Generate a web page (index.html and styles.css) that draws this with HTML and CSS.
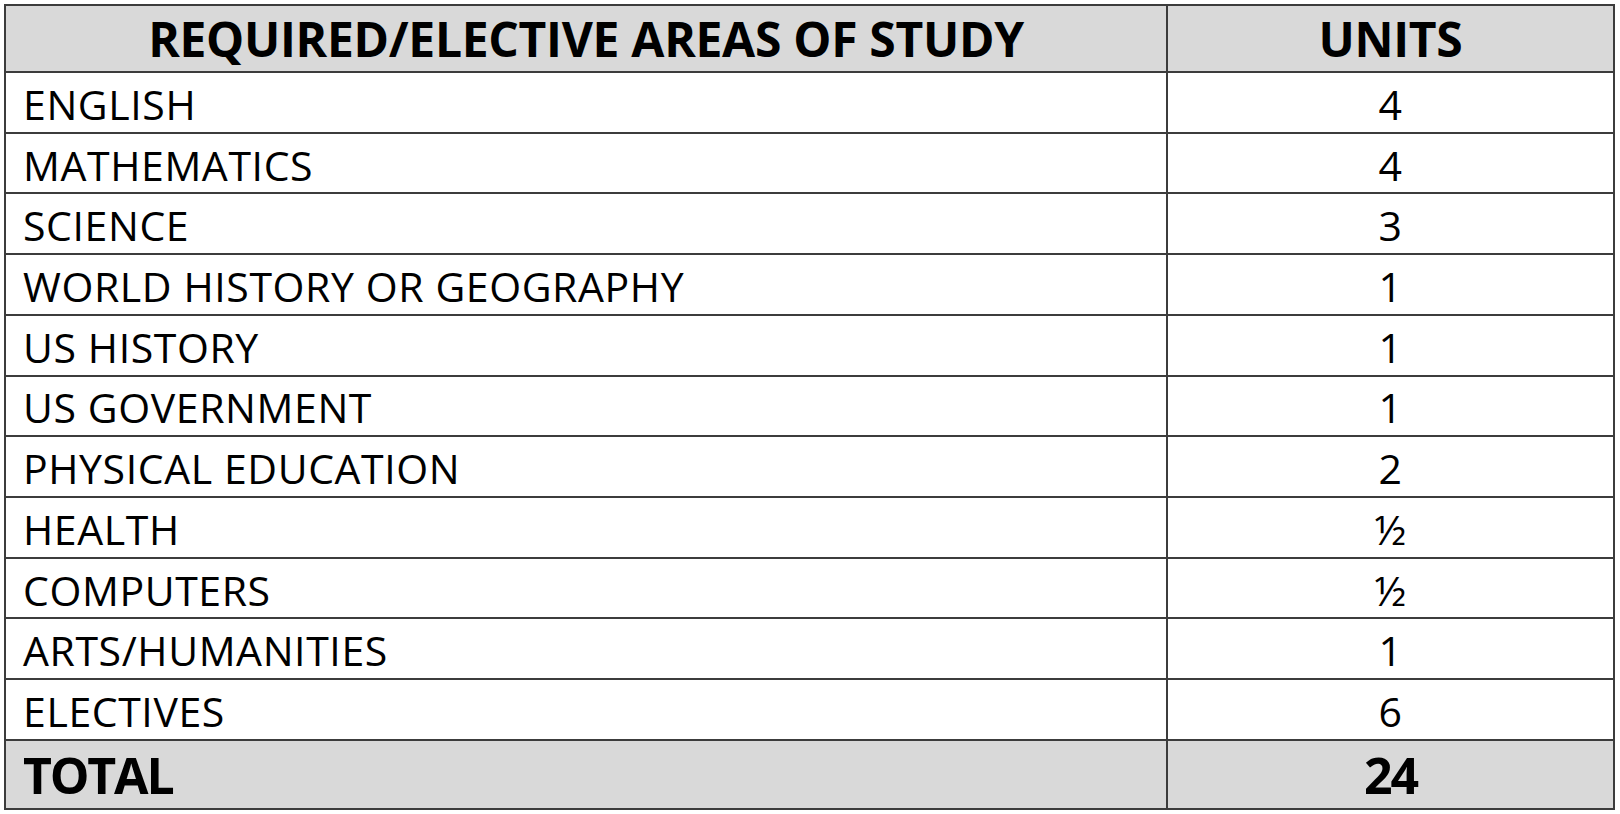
FILE: index.html
```html
<!DOCTYPE html>
<html lang="en">
<head>
<meta charset="utf-8">
<title>Required/Elective Areas of Study</title>
<link rel="stylesheet" href="styles.css">
</head>
<body>
<div class="page">
  <div class="grid" role="table">
    <div class="cell head area">REQUIRED/ELECTIVE AREAS OF STUDY</div>
    <div class="cell head units">UNITS</div>

    <div class="cell area">ENGLISH</div><div class="cell units">4</div>
    <div class="cell area">MATHEMATICS</div><div class="cell units">4</div>
    <div class="cell area">SCIENCE</div><div class="cell units">3</div>
    <div class="cell area">WORLD HISTORY OR GEOGRAPHY</div><div class="cell units">1</div>
    <div class="cell area">US HISTORY</div><div class="cell units">1</div>
    <div class="cell area">US GOVERNMENT</div><div class="cell units">1</div>
    <div class="cell area">PHYSICAL EDUCATION</div><div class="cell units">2</div>
    <div class="cell area">HEALTH</div><div class="cell units">½</div>
    <div class="cell area">COMPUTERS</div><div class="cell units">½</div>
    <div class="cell area">ARTS/HUMANITIES</div><div class="cell units">1</div>
    <div class="cell area">ELECTIVES</div><div class="cell units">6</div>

    <div class="cell total area-left">TOTAL</div>
    <div class="cell total units">24</div>
  </div>
</div>
</body>
</html>
```

FILE: styles.css
```css
html, body {
  margin: 0;
  padding: 0;
  background: #ffffff;
}

.page {
  padding: 4px;
}

.grid {
  display: grid;
  width: 1611px;
  box-sizing: border-box;
  grid-template-columns: 1162px 447px;
  grid-template-rows: 67px repeat(11, 60.73px) 69px;
  border-top: 2px solid #3c3c3c;
  border-left: 2px solid #3c3c3c;
  font-family: "Open Sans", "Liberation Sans", sans-serif;
  color: #000000;
}

.cell {
  box-sizing: border-box;
  border-right: 2px solid #3c3c3c;
  border-bottom: 2px solid #3c3c3c;
  display: flex;
  align-items: center;
  font-size: 41px;
  letter-spacing: 0.6px;
  padding-top: 3px;
}

.area {
  padding-left: 17px;
}

.units {
  justify-content: center;
}

.head {
  background: #d9d9d9;
  font-weight: 700;
  font-size: 48px;
  letter-spacing: -0.3px;
  padding-top: 0;
}

.head.area {
  justify-content: center;
  padding-left: 0;
}

.total {
  background: #d9d9d9;
  font-weight: 700;
  font-size: 50px;
  letter-spacing: -2.2px;
  padding-top: 2px;
}

.area-left {
  padding-left: 17px;
}
```
